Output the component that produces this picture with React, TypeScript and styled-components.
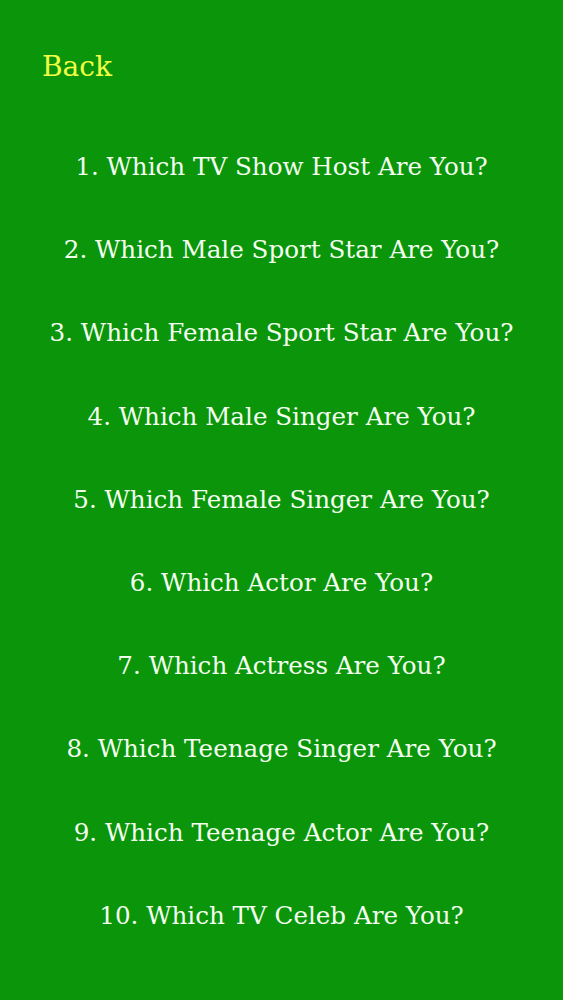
import React from "react";
import styled, { createGlobalStyle } from "styled-components";

const Global = createGlobalStyle`
  html, body { margin: 0; padding: 0; }
  body { background: #0a950a; }
`;

const Screen = styled.div`
  width: 563px;
  height: 1000px;
  background: #0a950a;
  font-family: "DejaVu Serif", "Liberation Serif", serif;
  display: flex;
  flex-direction: column;
  overflow: hidden;
`;

const TopBar = styled.div`
  height: 125px;
  display: flex;
  align-items: flex-start;
  padding: 50px 0 0 42px;
  box-sizing: border-box;
`;

const BackButton = styled.button`
  background: none;
  border: none;
  padding: 0;
  color: #f2ff44;
  font-family: inherit;
  font-size: 28px;
  line-height: 34px;
  cursor: pointer;
`;

const List = styled.ul`
  list-style: none;
  margin: 0;
  padding: 0;
  display: flex;
  flex-direction: column;
`;

const Item = styled.li`
  height: 83.2px;
  display: flex;
  align-items: center;
  justify-content: center;
  color: #f4fff0;
  font-size: 24.6px;
  white-space: nowrap;
`;

const quizzes = [
  "1. Which TV Show Host Are You?",
  "2. Which Male Sport Star Are You?",
  "3. Which Female Sport Star Are You?",
  "4. Which Male Singer Are You?",
  "5. Which Female Singer Are You?",
  "6. Which Actor Are You?",
  "7. Which Actress Are You?",
  "8. Which Teenage Singer Are You?",
  "9. Which Teenage Actor Are You?",
  "10. Which TV Celeb Are You?",
];

export default function App() {
  return (
    <Screen>
      <Global />
      <TopBar>
        <BackButton>Back</BackButton>
      </TopBar>
      <List>
        {quizzes.map((q) => (
          <Item key={q}>{q}</Item>
        ))}
      </List>
    </Screen>
  );
}
